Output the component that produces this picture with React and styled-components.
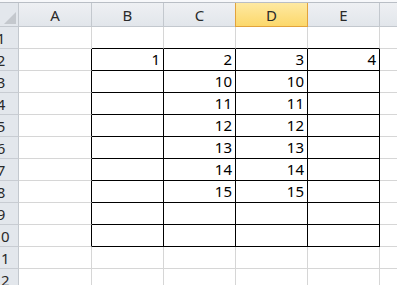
import React from 'react';
import styled, { createGlobalStyle } from 'styled-components';

const GlobalStyle = createGlobalStyle`
  html, body {
    margin: 0;
    padding: 0;
    background: #ffffff;
    overflow: hidden;
  }
  body {
    font-family: "Noto Sans", "Noto Sans CJK KR", sans-serif;
  }
`;

const columns = ['A', 'B', 'C', 'D', 'E', 'F'];
const widths = [73, 72, 72, 72, 72, 80];

// values by row number -> column letter
const data = {
  2: { B: 1, C: 2, D: 3, E: 4 },
  3: { C: 10, D: 10 },
  4: { C: 11, D: 11 },
  5: { C: 12, D: 12 },
  6: { C: 13, D: 13 },
  7: { C: 14, D: 14 },
  8: { C: 15, D: 15 },
};

const boxed = ['B', 'C', 'D', 'E'];
const rows = Array.from({ length: 12 }, (_, i) => i + 1);

const App = () => {
  return (
    <>
      <GlobalStyle />
      <Sheet>
        <TopStrip />
        <HeaderRow>
          <Corner>
            <CornerTriangle />
          </Corner>
          {columns.map((c, i) => (
            <ColHeader key={c} $w={widths[i]} $active={c === 'D'}>
              {c}
            </ColHeader>
          ))}
        </HeaderRow>
        {rows.map((r) => {
          const inBox = r >= 2 && r <= 10;
          return (
            <Row key={r}>
              <RowHeader>
                <RowNum>{r}</RowNum>
              </RowHeader>
              {columns.map((c, i) => {
                const cellIn = inBox && boxed.includes(c);
                const darkRight =
                  (inBox && (c === 'A' || boxed.includes(c)));
                const darkBottom =
                  boxed.includes(c) && r >= 1 && r <= 10;
                const v = data[r] && data[r][c];
                return (
                  <Cell
                    key={c}
                    $w={widths[i]}
                    $darkRight={darkRight}
                    $darkBottom={darkBottom}
                    $in={cellIn}
                  >
                    {v !== undefined ? v : ''}
                  </Cell>
                );
              })}
            </Row>
          );
        })}
      </Sheet>
    </>
  );
};

export default App;

const Sheet = styled.div`
  width: 397px;
  height: 285px;
  overflow: hidden;
  display: flex;
  flex-direction: column;
`;

const TopStrip = styled.div`
  height: 2px;
  background: #f7f8fa;
  border-bottom: 1px solid #b9bec5;
  flex-shrink: 0;
`;

const HeaderRow = styled.div`
  display: flex;
  height: 24px;
  flex-shrink: 0;
`;

const Corner = styled.div`
  width: 19px;
  flex-shrink: 0;
  box-sizing: border-box;
  background: #e3e7ec;
  border-right: 1px solid #c3c8ce;
  border-bottom: 1px solid #c3c8ce;
  display: flex;
  align-items: flex-end;
  justify-content: flex-end;
  padding: 0 2px 2px 0;
`;

const CornerTriangle = styled.div`
  width: 0;
  height: 0;
  border-left: 12px solid transparent;
  border-bottom: 12px solid #c4c8cd;
`;

const ColHeader = styled.div`
  width: ${(p) => p.$w}px;
  flex-shrink: 0;
  box-sizing: border-box;
  display: flex;
  align-items: center;
  justify-content: center;
  font-size: 15px;
  color: #2a2a2a;
  background: ${(p) =>
    p.$active
      ? 'linear-gradient(#fee9a2, #fcd86b)'
      : 'linear-gradient(#eef0f3, #e2e6eb)'};
  border-right: 1px solid ${(p) => (p.$active ? '#e2a33c' : '#c3c8ce')};
  border-bottom: 1px solid ${(p) => (p.$active ? '#e2a33c' : '#c3c8ce')};
  ${(p) => (p.$active ? 'border-left: 1px solid #e2a33c; margin-left: -1px; width: ' + (p.$w + 1) + 'px;' : '')}
`;

const Row = styled.div`
  display: flex;
  height: 22px;
  flex-shrink: 0;
`;

const RowHeader = styled.div`
  width: 19px;
  flex-shrink: 0;
  box-sizing: border-box;
  overflow: hidden;
  background: #e3e7ec;
  border-right: 1px solid #c3c8ce;
  border-bottom: 1px solid #c8ccd2;
  display: flex;
`;

const RowNum = styled.div`
  width: 36px;
  margin-left: -17px;
  flex-shrink: 0;
  text-align: center;
  font-size: 15px;
  line-height: 22px;
  color: #2a2a2a;
`;

const Cell = styled.div`
  width: ${(p) => p.$w}px;
  flex-shrink: 0;
  box-sizing: border-box;
  border-right: 1px solid ${(p) => (p.$darkRight ? '#000' : '#d6d6d6')};
  border-bottom: 1px solid ${(p) => (p.$darkBottom ? '#000' : '#d6d6d6')};
  display: flex;
  align-items: flex-end;
  justify-content: flex-end;
  padding: 0 3px 1px 0;
  font-size: 15px;
  line-height: 20px;
  color: #000;
`;
